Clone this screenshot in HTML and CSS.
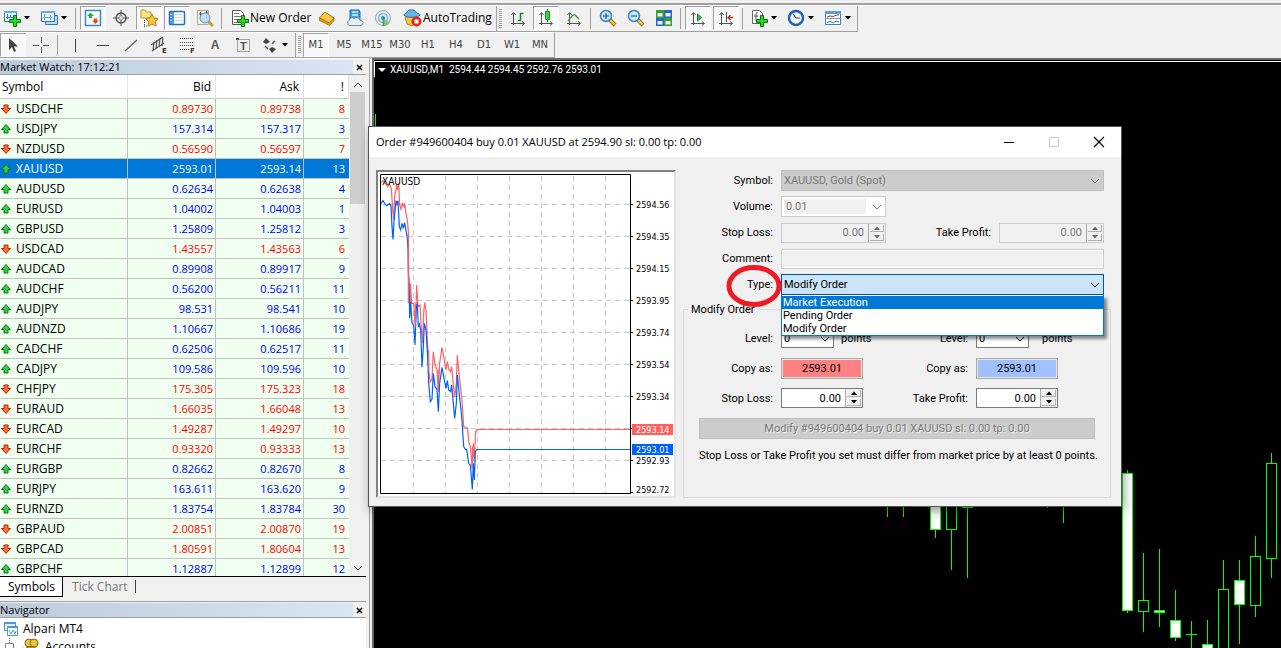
FILE: index.html
```html
<!DOCTYPE html>
<html lang="en">
<head>
<meta charset="utf-8">
<title>Alpari MT4</title>
<link rel="stylesheet" href="styles.css">
</head>
<body>
<svg class="defs" aria-hidden="true">
  <symbol id="up" viewBox="0 0 12 12"><path d="M6 1.500 10.500 6.500H8V10H4V6.500H1.500Z" fill="#3ccb46" stroke="#0d7a1c"/></symbol>
  <symbol id="down" viewBox="0 0 12 12"><path d="M6 10.500 10.500 5.500H8V2H4V5.500H1.500Z" fill="#ff6a35" stroke="#b0290a"/></symbol>
  <symbol id="caret" viewBox="0 0 6 4"><path d="M0 0h6L3 3.500Z"/></symbol>
  <symbol id="chev" viewBox="0 0 10 6"><path d="M1 1l4 4 4-4" fill="none" stroke="currentColor"/></symbol>
  <symbol id="plus" viewBox="0 0 12 12"><path d="M4.500 .5h3v4h4v3h-4v4h-3v-4h-4v-3h4Z" fill="#22dd22" stroke="#087508"/></symbol>
  <symbol id="axes" viewBox="0 0 18 18"><path d="M4.500 16V4M2.500 6l2-2.500 2 2.500M2 14.500h13M13 12.500l2.500 2-2.500 2" fill="none" stroke="#555"/></symbol>
  <symbol id="lens" viewBox="0 0 18 18"><path d="M11 11l5 5" stroke="#a47412" stroke-width="4"/><path d="M11 11l4.500 4.500" stroke="#f3cc50" stroke-width="2"/><circle cx="7" cy="7" r="5.500" fill="#cfeafd" stroke="#3b7fc4" stroke-width="1.500"/></symbol>
</svg>

<header class="toolbars">
  <div class="bar">
    <button class="tool drop" aria-label="New chart"><svg width="18" height="18" viewBox="0 0 18 18"><path d="M1.500 2.500h12v10h-12Z" fill="#eaf5ff" stroke="#2f78b7"/><path d="M1 2h13v2H1Z" fill="#69aee0"/><path d="M4.500 5v5M3 8.500h7M7.500 6v3" stroke="#2f78b7"/><use href="#plus" x="6" y="6" width="12" height="12"/></svg><svg class="caret" width="6" height="4"><use href="#caret"/></svg></button>
    <button class="tool drop" aria-label="Profiles"><svg width="18" height="18" viewBox="0 0 18 18"><path d="M5.500 6.500h12v9h-12Z" fill="#b9dcf7" stroke="#2f78b7"/><path d="M1.500 2.500h13v10h-13Z" fill="#eaf5ff" stroke="#2f78b7"/><path d="M1 2h14v2H1Z" fill="#69aee0"/><path d="M4.500 5v6M3 8.500h9M10.500 6v5" stroke="#6aa5d3"/></svg><svg class="caret" width="6" height="4"><use href="#caret"/></svg></button>
    <i class="sep"></i>
    <button class="tool on" aria-label="Market Watch"><svg width="18" height="18" viewBox="0 0 18 18"><path d="M1.500 1.500h15v15h-15Z" fill="#fff" stroke="#2f8ad0" stroke-width="1.500"/><path d="M6.500 3.500 10 7H8v2H5V7H3Z" fill="#25b32b"/><path d="M11.500 15 8 11.500h2v-2h3v2h2Z" fill="#f04a1d"/></svg></button>
    <button class="tool" aria-label="Data Window"><svg width="18" height="18" viewBox="0 0 18 18" fill="none" stroke="#555"><circle cx="9" cy="9" r="5" stroke-width="1.500"/><circle cx="9" cy="9" r="2" stroke="#999"/><path d="M9 1v6M9 11v6M1 9h6M11 9h6"/></svg></button>
    <button class="tool on" aria-label="Navigator"><svg width="18" height="18" viewBox="0 0 18 18"><path d="M1 3V1h4l1 2h5v6H1Z" fill="#fbe48a" stroke="#c7981b"/><path d="M4.500 11v7M4 17h4" stroke="#555" stroke-dasharray="1 1"/><path d="M12 5l2 4 4.500.5-3.300 3 1 4.500L12 15l-4 2 .8-4.500-3.300-3L10 9Z" fill="#f8c63a" stroke="#b57f10"/></svg></button>
    <button class="tool on" aria-label="Terminal"><svg width="18" height="18" viewBox="0 0 18 18"><rect x="1.500" y="2.500" width="15" height="13" rx="1" fill="#fff" stroke="#2473b8" stroke-width="1.500"/><path d="M2 3h4v12H2Z" fill="#4f9bd9"/><path d="M2.500 5.500h1M2.500 8.500h1M2.500 11.500h1" stroke="#fff"/><path d="M7 5.500h8M7 8.500h8M7 11.500h8" stroke="#c3d8ea"/></svg></button>
    <button class="tool" aria-label="Strategy Tester"><svg width="18" height="18" viewBox="0 0 18 18"><path d="M1.500 1.500h11v14h-11Z" fill="#f4efe2" stroke="#b7a98c"/><path d="M4.500 3v8M10.500 2v8M3 5h3M9 4h3" stroke="#555"/><path d="M12 12l5 5" stroke="#c8a03a" stroke-width="3"/><circle cx="9" cy="9" r="5" fill="#b9dcf5" fill-opacity=".85" stroke="#5a98cf"/></svg></button>
    <i class="sep"></i>
    <button class="tool wide" aria-label="New Order"><svg width="18" height="18" viewBox="0 0 18 18"><path d="M1.500 1.500h8l3 3v11h-11Z" fill="#fff" stroke="#555"/><path d="M3 4.500h5M3 7.500h7M3 10.500h4M3 13.500h3" stroke="#777"/><use href="#plus" x="6" y="6" width="12" height="12"/></svg><span>New Order</span></button>
    <button class="tool" aria-label="MetaEditor"><svg width="18" height="18" viewBox="0 0 18 18"><path d="M1.500 9 7 3l9 6-4 6Z" fill="#f4c944" stroke="#b5770d"/><path d="M1.500 9v2.500l10 5 4.500-5V9l-4.500 5Z" fill="#d99a1e" stroke="#a5690c" stroke-width=".7"/></svg></button>
    <button class="tool" aria-label="Virtual hosting"><svg width="18" height="18" viewBox="0 0 18 18"><path d="M4 1h9l1 2v8H4Z" fill="#36a2e8" stroke="#1b6fb0"/><path d="M6 3h6M6 6h6" stroke="#d9f0ff" stroke-width="1.500"/><path d="M3 16.500a3 3 0 0 1 0-5 3 3 0 0 1 5-2 3.500 3.500 0 0 1 6 2 2.500 2.500 0 0 1 1 5Z" fill="#e9f0f8" stroke="#6f8db0"/></svg></button>
    <button class="tool" aria-label="Signals"><svg width="18" height="18" viewBox="0 0 18 18" fill="none"><circle cx="9" cy="9" r="7.500" fill="#deeaf0" stroke="#8fb0c2"/><path d="M9 9l7 5a8 8 0 0 1-7 3Z" fill="#7cc47c"/><circle cx="9" cy="9" r="4.500" stroke="#8db8c8" stroke-width="1.500"/><circle cx="9" cy="9" r="2" fill="#2f86c2"/><path d="M9.500 9v8" stroke="#39a043" stroke-width="1.500"/></svg></button>
    <button class="tool wide auto" aria-label="AutoTrading"><svg width="19" height="18" viewBox="0 0 19 18"><path d="M2 8h13l-1 5-5 4-5-2Z" fill="#f5c83c" stroke="#b98518"/><path d="M1 6c0-2 3-1 3-3 1-3 8-3 9 0 0 2 4 1 4 3-1 3-15 3-16 0Z" fill="#67b4e6" stroke="#2c78b4"/><circle cx="13.500" cy="12.500" r="5" fill="#e3281a"/><path d="M11.500 10.500h4v4h-4Z" fill="#fff"/></svg><span>AutoTrading</span></button>
    <i class="sep end"></i><i class="grip"></i>
    <button class="tool" aria-label="Bar Chart"><svg width="18" height="18"><use href="#axes"/><path d="M11.500 4v8M11.500 4.500h3M9 11.500h3" fill="none" stroke="#118822" stroke-width="1.500"/></svg></button>
    <button class="tool on" aria-label="Candlesticks"><svg width="18" height="18"><use href="#axes"/><path d="M10.500 0v13" stroke="#118822"/><path d="M8.500 2.500h4v8h-4Z" fill="#30dd40" stroke="#118822"/></svg></button>
    <button class="tool" aria-label="Line Chart"><svg width="18" height="18"><use href="#axes"/><path d="M3 12c4-5 6-8 8-5l3 3" fill="none" stroke="#22a033" stroke-width="1.300"/></svg></button>
    <i class="sep"></i>
    <button class="tool" aria-label="Zoom In"><svg width="18" height="18"><use href="#lens"/><path d="M4 7h6M7 4v6" stroke="#2e75b8" stroke-width="1.500"/></svg></button>
    <button class="tool" aria-label="Zoom Out"><svg width="18" height="18"><use href="#lens"/><path d="M4 7h6" stroke="#2e75b8" stroke-width="1.500"/></svg></button>
    <button class="tool" aria-label="Tile Windows"><svg width="18" height="18" viewBox="0 0 18 18"><path d="M1 1h8v8H1Z" fill="#3f9e28"/><path d="M9 1h8v8H9Z" fill="#2665cc"/><path d="M1 9h8v8H1Z" fill="#2665cc"/><path d="M9 9h8v8H9Z" fill="#3f9e28"/><path d="M2.500 4h5v3.500h-5ZM10.500 4h5v3.500h-5ZM2.500 12h5v3.500h-5ZM10.500 12h5v3.500h-5Z" fill="#e6f2ff"/></svg></button>
    <i class="sep"></i>
    <button class="tool on" aria-label="Auto Scroll"><svg width="18" height="18"><use href="#axes"/><path d="M8.500 5l4 3.500-4 3.500Z" fill="#27c93f" stroke="#0f8420"/></svg></button>
    <button class="tool on" aria-label="Chart Shift"><svg width="18" height="18"><use href="#axes"/><path d="M9.500 3v10" stroke="#1c5f8c"/><path d="M16 8.500h-4M13.500 6 11 8.500l2.500 2.500" fill="none" stroke="#c43b18" stroke-width="1.500"/></svg></button>
    <i class="sep"></i>
    <button class="tool drop" aria-label="Indicators"><svg width="18" height="18" viewBox="0 0 18 18"><path d="M2.500 1.500h7l3 3v10h-10Z" fill="#fff" stroke="#666"/><path d="M8 4c-2-1-2 1-2 3v5M4 7h4" fill="none" stroke="#555"/><use href="#plus" x="6" y="6" width="12" height="12"/></svg><svg class="caret" width="6" height="4"><use href="#caret"/></svg></button>
    <button class="tool drop" aria-label="Periods"><svg width="18" height="18" viewBox="0 0 18 18"><circle cx="9" cy="9" r="7" fill="#eef5fc" stroke="#1d62b4" stroke-width="2.500"/><path d="M9 9 6 5M9 9h4" stroke="#444" stroke-width="1.200"/></svg><svg class="caret" width="6" height="4"><use href="#caret"/></svg></button>
    <button class="tool drop" aria-label="Templates"><svg width="18" height="18" viewBox="0 0 18 18"><path d="M1.500 2.500h15v13h-15Z" fill="#fff" stroke="#3a7fbd"/><path d="M1 2h16v3H1ZM1 9h16v1H1Z" fill="#5a9fd6"/><path d="M3 8l3-1 3 .5 4-1.500h2" fill="none" stroke="#a33b1a"/><path d="M3 14l3-2 3 2 3-2 3 1" fill="none" stroke="#2a9434"/></svg><svg class="caret" width="6" height="4"><use href="#caret"/></svg></button>
  </div>
  <div class="bar second">
    <button class="tool on" aria-label="Cursor"><svg width="18" height="18"><path d="M5 2v12l3-3 2 5 2-1-2-4.500h4Z" fill="#444"/></svg></button>
    <button class="tool" aria-label="Crosshair"><svg width="18" height="18"><path d="M9.500 1v6M9.500 11v6M1 9.500h6M11 9.500h6" stroke="#555"/></svg></button>
    <i class="sep"></i>
    <button class="tool" aria-label="Vertical Line"><svg width="18" height="18"><path d="M9.500 3v13" stroke="#444"/></svg></button>
    <button class="tool" aria-label="Horizontal Line"><svg width="18" height="18"><path d="M3 9.500h12" stroke="#444"/></svg></button>
    <button class="tool" aria-label="Trendline"><svg width="18" height="18"><path d="M3 15 15 4" stroke="#555" stroke-width="1.200"/></svg></button>
    <button class="tool" aria-label="Equidistant Channel"><svg width="18" height="18" viewBox="0 0 18 18"><path d="M1 9 13 1M2 15 14 7M4 6l-1 8M7 4 6 12M10 2 9 11M13 2l-1 8" stroke="#555" stroke-width="1.200"/><text x="12" y="17" class="mini">E</text></svg></button>
    <button class="tool" aria-label="Fibonacci Retracement"><svg width="18" height="18" viewBox="0 0 18 18"><path d="M2 2.500h14M2 6.500h14M2 9.500h14M2 13.500h9" stroke="#444" stroke-dasharray="1 1"/><text x="12" y="17" class="mini">F</text></svg></button>
    <button class="tool letter" aria-label="Text">A</button>
    <button class="tool" aria-label="Text Label"><svg width="18" height="18" viewBox="0 0 18 18"><path d="M3.500 3.500h12v12h-12Z" fill="none" stroke="#555" stroke-dasharray="1 1"/><path d="M2 2h3v2H2Z" fill="#555"/><text x="6" y="14" class="label-t">T</text></svg></button>
    <button class="tool drop" aria-label="Arrows"><svg width="18" height="18" viewBox="0 0 18 18"><path d="M2 6l3-4 4 4-4 2ZM8 13l3-2 4 2-4 4Z" fill="#444"/><path d="M4 10l3 3M11 8l3-3" stroke="#555" stroke-width="1.500"/></svg><svg class="caret" width="6" height="4"><use href="#caret"/></svg></button>
    <i class="sep end"></i><i class="grip"></i>
    <button class="tool on">M1</button><button class="tool">M5</button><button class="tool">M15</button><button class="tool">M30</button><button class="tool">H1</button><button class="tool">H4</button><button class="tool">D1</button><button class="tool">W1</button><button class="tool">MN</button>
  </div>
</header>

<main class="workspace">
  <aside class="side">
    <section class="watch">
      <h2 class="caption"><span>Market Watch: 17:12:21</span><button aria-label="Close Market Watch"><svg width="7" height="7"><path d="M1 1l5 5M6 1 1 6" stroke="#000" stroke-width="1.500"/></svg></button></h2>
      <div class="quotes">
        <table>
          <thead><tr><th>Symbol</th><th>Bid</th><th>Ask</th><th>!</th></tr></thead>
          <tbody>
            <tr class="dn"><td><svg><use href="#down"/></svg>USDCHF</td><td>0.89730</td><td>0.89738</td><td>8</td></tr>
            <tr><td><svg><use href="#up"/></svg>USDJPY</td><td>157.314</td><td>157.317</td><td>3</td></tr>
            <tr class="dn"><td><svg><use href="#down"/></svg>NZDUSD</td><td>0.56590</td><td>0.56597</td><td>7</td></tr>
            <tr class="sel"><td><svg><use href="#up"/></svg>XAUUSD</td><td>2593.01</td><td>2593.14</td><td>13</td></tr>
            <tr><td><svg><use href="#up"/></svg>AUDUSD</td><td>0.62634</td><td>0.62638</td><td>4</td></tr>
            <tr><td><svg><use href="#up"/></svg>EURUSD</td><td>1.04002</td><td>1.04003</td><td>1</td></tr>
            <tr><td><svg><use href="#up"/></svg>GBPUSD</td><td>1.25809</td><td>1.25812</td><td>3</td></tr>
            <tr class="dn"><td><svg><use href="#down"/></svg>USDCAD</td><td>1.43557</td><td>1.43563</td><td>6</td></tr>
            <tr><td><svg><use href="#up"/></svg>AUDCAD</td><td>0.89908</td><td>0.89917</td><td>9</td></tr>
            <tr><td><svg><use href="#up"/></svg>AUDCHF</td><td>0.56200</td><td>0.56211</td><td>11</td></tr>
            <tr><td><svg><use href="#up"/></svg>AUDJPY</td><td>98.531</td><td>98.541</td><td>10</td></tr>
            <tr><td><svg><use href="#up"/></svg>AUDNZD</td><td>1.10667</td><td>1.10686</td><td>19</td></tr>
            <tr><td><svg><use href="#up"/></svg>CADCHF</td><td>0.62506</td><td>0.62517</td><td>11</td></tr>
            <tr><td><svg><use href="#up"/></svg>CADJPY</td><td>109.586</td><td>109.596</td><td>10</td></tr>
            <tr class="dn"><td><svg><use href="#down"/></svg>CHFJPY</td><td>175.305</td><td>175.323</td><td>18</td></tr>
            <tr class="dn"><td><svg><use href="#down"/></svg>EURAUD</td><td>1.66035</td><td>1.66048</td><td>13</td></tr>
            <tr class="dn"><td><svg><use href="#down"/></svg>EURCAD</td><td>1.49287</td><td>1.49297</td><td>10</td></tr>
            <tr class="dn"><td><svg><use href="#down"/></svg>EURCHF</td><td>0.93320</td><td>0.93333</td><td>13</td></tr>
            <tr><td><svg><use href="#up"/></svg>EURGBP</td><td>0.82662</td><td>0.82670</td><td>8</td></tr>
            <tr><td><svg><use href="#up"/></svg>EURJPY</td><td>163.611</td><td>163.620</td><td>9</td></tr>
            <tr><td><svg><use href="#up"/></svg>EURNZD</td><td>1.83754</td><td>1.83784</td><td>30</td></tr>
            <tr class="dn"><td><svg><use href="#down"/></svg>GBPAUD</td><td>2.00851</td><td>2.00870</td><td>19</td></tr>
            <tr class="dn"><td><svg><use href="#down"/></svg>GBPCAD</td><td>1.80591</td><td>1.80604</td><td>13</td></tr>
            <tr><td><svg><use href="#up"/></svg>GBPCHF</td><td>1.12887</td><td>1.12899</td><td>12</td></tr>
          </tbody>
        </table>
        <div class="scroll"><svg class="flip" width="10" height="6"><use href="#chev"/></svg><i class="thumb"></i><svg width="10" height="6"><use href="#chev"/></svg></div>
      </div>
      <nav class="tabs"><button class="active">Symbols</button><button>Tick Chart</button></nav>
    </section>
    <section class="navigator">
      <h2 class="caption"><span>Navigator</span><button aria-label="Close Navigator"><svg width="7" height="7"><path d="M1 1l5 5M6 1 1 6" stroke="#000" stroke-width="1.500"/></svg></button></h2>
      <ul class="tree">
        <li><svg width="16" height="16"><path d="M2.500 1.500h11v8h-11Z" fill="#e5f3ff" stroke="#4a97d6"/><path d="M2 1h12v2H2Z" fill="#4a97d6"/><path d="M5.500 5.500h10v9h-10Z" fill="#fff" stroke="#4a97d6"/><path d="M5 5h11v2H5Z" fill="#4a97d6"/><path d="M7 9l2 4 2-4 2 4 1-3" fill="none" stroke="#4a97d6"/></svg>Alpari MT4</li>
        <li class="child"><svg width="12" height="18"><path d="M4.500 0v5" stroke="#777" stroke-dasharray="1 1"/><path d="M.5 5.500h8v8h-8Z" fill="#fff" stroke="#888"/></svg><svg width="18" height="18"><circle cx="7" cy="5" r="4" fill="#eac53c" stroke="#8a6a0c"/><circle cx="12" cy="5" r="4" fill="#eac53c" stroke="#8a6a0c"/><path d="M1 17c0-9 8-8 8-8s8-1 8 8Z" fill="#d9ae22" stroke="#8a6a0c"/><path d="M1 9l4 6-4 2Z" fill="#2fb53a"/></svg>Accounts</li>
      </ul>
    </section>
  </aside>
  <section class="chart">
    <p><svg width="8" height="4" viewBox="0 0 8 4"><path d="M0 0h8L4 4Z" fill="#fff"/></svg><span>XAUUSD,M1&nbsp; 2594.44 2594.45 2592.76 2593.01</span></p>
    <svg class="candles" viewBox="375 62 906 586" width="906" height="586" shape-rendering="crispEdges" stroke="#0f0" fill="#000">
      <path d="M375.500 114v20M887.500 490v27M903.500 490v27M935.500 490v48M951.500 490v80M967.500 490v88M1047.500 490v18M1063.500 490v33M1127.500 470v143M1143.500 553v79M1159.500 549v78M1175.500 590v51M1191.500 621v27M1186 634.500h11M1207.500 620v28M1223.500 560v30M1239.500 560v84M1255.500 536v81M1271.500 453v125"/>
      <path fill="#fff" d="M930.500 490h10v39h-10ZM1122.500 473.500h10v137h-10ZM1154.500 610.500h10v2h-10ZM1170.500 620.500h10v17h-10ZM1202.500 644.500h10v14h-10ZM1234.500 580.500h10v24h-10Z"/>
      <path d="M946.500 490h10v39h-10ZM962.500 490h10v17h-10ZM1138.500 600.500h10v11h-10ZM1218.500 589.500h10v70h-10ZM1250.500 556.500h10v49h-10ZM1266.500 463.500h10v95h-10Z"/>
    </svg>
  </section>
</main>

<section class="dialog" role="dialog" aria-labelledby="dlg-title">
  <header class="titlebar">
    <h1 id="dlg-title">Order #949600404 buy 0.01 XAUUSD at 2594.90 sl: 0.00 tp: 0.00</h1>
    <button aria-label="Minimize"><svg width="12" height="12"><path d="M1 6.500h10" stroke="#000"/></svg></button>
    <button aria-label="Maximize" disabled><svg width="12" height="12"><path d="M1.500 1.500h9v9h-9Z" fill="none" stroke="#ccc"/></svg></button>
    <button aria-label="Close"><svg width="12" height="12"><path d="M1 1l10 10M11 1 1 11" stroke="#000" stroke-width="1.200"/></svg></button>
  </header>
  <div class="content">
    <figure class="ticks">
      <svg width="296" height="324" viewBox="378 172 296 324">
        <path d="M413.500 176v317M445.500 176v317M477.500 176v317M509.500 176v317M541.500 176v317M573.500 176v317M605.500 176v317M381 204.500h250M381 236.500h250M381 268.500h250M381 300.500h250M381 332.500h250M381 364.500h250M381 396.500h250M381 428.500h250M381 460.500h250" stroke="#c8c8c8" stroke-dasharray="5 4"/>
        <g transform="translate(376 170) scale(.33333)" fill="none" stroke-width="3.600">
          <path stroke="#ff6060" d="M15 38 21 32 30 42 35 50 40 42 46 55 50 120 53 148 56 80 62 45 65 60 68 40 71 105 75 118 79 100 84 110 86 100 90 130 94 150 97 185 98 305 102 400 103 340 107 400 113 400 118 470 122 345 126 410 132 405 135 460 140 520 143 430 146 398 150 420 155 530 158 600 163 635 168 628 172 545 177 585 183 600 187 665 191 580 198 532 204 565 210 600 214 575 219 600 224 605 227 590 232 645 236 682 241 640 244 555 249 610 255 665 258 690 263 770 275 775 278 815 283 830 289 895 292 820 295 870 299 785 303 778.500H765"/>
          <path stroke="#0060ff" d="M15 100 21 92 27 102 32 107 40 101 45 107 48 170 51 208 54 155 60 92 63 102 66 92 70 170 74 180 78 160 82 175 86 158 90 182 94 205 96 240 97 305 100 385 101 445 104 395 108 460 113 465 117 525 121 408 124 402 127 470 130 462 134 480 138 592 142 530 145 460 150 480 155 560 158 640 163 695 168 688 172 610 177 650 183 658 187 725 191 640 198 592 204 625 210 655 214 632 218 660 224 665 227 645 232 700 236 745 241 700 244 615 249 665 255 720 258 750 263 830 268 838 272 838 278 880 283 885 289 958 292 880 295 930 298 845 302 838.500H765"/>
          <path stroke="#ff6060" d="M97 190V400M118 400V470M158 540V600M187 600V665M289 830V895"/>
        </g>
        <path d="M380.500 174.500h250v319h-250ZM631 204.500h2M631 236.500h2M631 268.500h2M631 300.500h2M631 332.500h2M631 364.500h2M631 396.500h2M631 428.500h2M631 460.500h2M631 492.500h2" fill="none" stroke="#000"/>
        <path d="M632 424h41v11h-41Z" fill="#ff6060"/><path d="M632 444h41v11h-41Z" fill="#0060ff"/>
        <g class="scale"><text x="382" y="185" class="name">XAUUSD</text><text x="636" y="208">2594.56</text><text x="636" y="240">2594.35</text><text x="636" y="272">2594.15</text><text x="636" y="304">2593.95</text><text x="636" y="336">2593.74</text><text x="636" y="368">2593.54</text><text x="636" y="400">2593.34</text><text x="636" y="464">2592.93</text><text x="636" y="493">2592.72</text><text x="636" y="433" fill="#fff">2593.14</text><text x="636" y="453" fill="#fff">2593.01</text></g>
      </svg>
    </figure>
    <form class="order">
      <div class="fields">
        <label for="symbol">Symbol:</label>
        <span class="combo full dark"><select id="symbol" disabled><option>XAUUSD, Gold (Spot)</option></select><svg width="10" height="6"><use href="#chev"/></svg></span>
        <label for="volume">Volume:</label>
        <span class="combo vol"><select id="volume" disabled><option>0.01</option></select><svg width="10" height="6"><use href="#chev"/></svg></span><i></i><i></i>
        <label for="sl0">Stop Loss:</label>
        <span class="spin off"><input id="sl0" value="0.00" disabled><span><button type="button" disabled aria-label="Increase"><svg class="flip" width="6" height="4"><use href="#caret"/></svg></button><button type="button" disabled aria-label="Decrease"><svg width="6" height="4"><use href="#caret"/></svg></button></span></span>
        <label for="tp0">Take Profit:</label>
        <span class="spin off"><input id="tp0" value="0.00" disabled><span><button type="button" disabled aria-label="Increase"><svg class="flip" width="6" height="4"><use href="#caret"/></svg></button><button type="button" disabled aria-label="Decrease"><svg width="6" height="4"><use href="#caret"/></svg></button></span></span>
        <label for="comment">Comment:</label>
        <input id="comment" class="full text" disabled>
        <label for="type">Type:<svg class="mark" width="56" height="44" viewBox="0 0 56 44"><ellipse cx="28" cy="22" rx="25" ry="18.500" fill="none" stroke="#ed1c24" stroke-width="5"/></svg></label>
        <span class="combo full open"><select id="type"><option>Modify Order</option></select><svg width="10" height="6"><use href="#chev"/></svg>
          <ul class="menu" role="listbox"><li class="hot" role="option">Market Execution</li><li role="option">Pending Order</li><li role="option">Modify Order</li></ul></span>
      </div>
      <fieldset>
        <legend>Modify Order</legend>
        <div class="modify">
          <label for="lv1">Level:</label>
          <span class="level"><span class="combo"><select id="lv1"><option>0</option></select><svg width="10" height="6"><use href="#chev"/></svg></span><span>points</span></span>
          <label for="lv2">Level:</label>
          <span class="level far"><span class="combo"><select id="lv2"><option>0</option></select><svg width="10" height="6"><use href="#chev"/></svg></span><span>points</span></span>
          <label for="c1">Copy as:</label><button id="c1" class="copy red" type="button">2593.01</button>
          <label for="c2">Copy as:</label><button id="c2" class="copy blue" type="button">2593.01</button>
          <label for="sl1">Stop Loss:</label>
          <span class="spin"><input id="sl1" value="0.00"><span><button type="button" aria-label="Increase"><svg class="flip" width="6" height="4"><use href="#caret"/></svg></button><button type="button" aria-label="Decrease"><svg width="6" height="4"><use href="#caret"/></svg></button></span></span>
          <label for="tp1">Take Profit:</label>
          <span class="spin"><input id="tp1" value="0.00"><span><button type="button" aria-label="Increase"><svg class="flip" width="6" height="4"><use href="#caret"/></svg></button><button type="button" aria-label="Decrease"><svg width="6" height="4"><use href="#caret"/></svg></button></span></span>
        </div>
        <button class="submit" type="button" disabled>Modify #949600404 buy 0.01 XAUUSD sl: 0.00 tp: 0.00</button>
        <p class="note">Stop Loss or Take Profit you set must differ from market price by at least 0 points.</p>
      </fieldset>
    </form>
  </div>
</section>
</body>
</html>
```
FILE: styles.css
```css
* { box-sizing: border-box; }
body { margin: 0; height: 100vh; overflow: hidden; display: flex; flex-direction: column; position: relative; background: #f0f0f0; color: #000; font: 12px/16px "Open Sans", "Noto Sans", sans-serif; }
button, input, select { font: inherit; color: inherit; margin: 0; padding: 0; }
button { border: 0; background: none; }
h1, h2, p, ul, figure { margin: 0; padding: 0; font-weight: normal; list-style: none; }
svg { display: block; flex: none; }
.defs { position: absolute; width: 0; height: 0; }
.flip { transform: rotate(180deg); }

/* toolbars */
.toolbars { padding-top: 3px; display: flex; flex-direction: column; align-items: flex-start; }
.toolbars::before { content: ""; align-self: stretch; height: 2px; background: #a0a0a0; border-bottom: 1px solid #fff; }
.bar { display: flex; gap: 2px; height: 26px; padding-right: 1px; border-right: 1px solid #a0a0a0; border-bottom: 1px solid #a0a0a0; }
.bar.second { height: 26px; border-top: 1px solid #fff; }
.tool { width: 26px; height: 24px; display: flex; align-items: center; justify-content: center; border: 1px solid transparent; white-space: nowrap; }
.tool.on { border-color: #a0a0a0 #fff #fff #a0a0a0; background: #f8f8f8; }
.tool.drop { width: 35px; padding-left: 2px; justify-content: flex-start; gap: 3px; }
.tool.wide { width: 86px; padding-left: 4px; justify-content: flex-start; gap: 1px; }
.tool.auto { width: 96px; }
.sep { width: 1px; margin: 2px 2px 2px 1px; background: #a0a0a0; }
.sep.end { margin: 0; }
.grip { width: 3px; margin: 3px 1px 3px 0; background: repeating-linear-gradient(#a0a0a0 0 1px, #f0f0f0 1px 2px); }
.second .grip { margin-right: 0; }
.second .tool { font: 10px/12px "DejaVu Sans", sans-serif; color: #444; }
.second .tool.letter { font: bold 12px/16px "Liberation Sans", sans-serif; color: #555; }
.second .caret { fill: #000; }
.mini { font: bold 7px "DejaVu Sans", sans-serif; fill: #333; }
.label-t { font: bold 11px "Liberation Sans", sans-serif; fill: #555; }

/* docked panels */
.workspace { flex: 1; min-height: 0; display: flex; }
.side { width: 370px; display: flex; flex-direction: column; padding-right: 3px; border-top: 1px solid #fff; border-right: 1px solid #a0a0a0; }
.caption { display: flex; height: 16px; font-size: 11px; line-height: 13px; padding-top: 1px; border-bottom: 1px solid #a0a0a0; }
.caption span { flex: 1; background: linear-gradient(90deg, #bccbda, #d8e5f2); }
.caption button { width: 13px; display: flex; align-items: center; justify-content: center; }
.watch { height: 543px; display: flex; flex-direction: column; border-bottom: 1px solid #a0a0a0; }
.quotes { flex: 1; min-height: 0; display: flex; overflow: hidden; background: #fff; }
.quotes table { flex: 1; align-self: flex-start; border-collapse: separate; border-spacing: 0; table-layout: fixed; }
.quotes th { height: 24px; padding: 0 4px; text-align: right; font-weight: normal; border-right: 1px solid #e5e5e5; border-bottom: 1px solid #c8c8c8; }
.quotes th:first-child { width: 128px; text-align: left; padding-left: 2px; }
.quotes th:nth-child(2), .quotes th:nth-child(3) { width: 88px; }
.quotes td { height: 20px; padding: 0 2px; line-height: 16px; text-align: right; font-size: 11px; background: #f0fff0; color: #00f; border-right: 1px solid #c0c0c0; border-bottom: 1px solid #c0c0c0; }
.quotes td:last-child { border-right: 0; padding-right: 4px; }
.quotes .dn td { color: #f00; }
.quotes .sel td { background: #0078d7; color: #fff; }
.quotes tr td:first-child { color: #000; font-size: 12px; padding: 0; display: flex; align-items: center; gap: 4px; }
.quotes .sel td:first-child { color: #fff; }
.quotes td svg { width: 12px; height: 12px; }
.scroll { width: 17px; padding: 7px 0 5px; display: flex; flex-direction: column; align-items: center; background: #f0f0f0; color: #444; }
.thumb { width: 15px; height: 112px; margin: 4px 0 auto; background: #cdcdcd; }
.tabs { height: 25px; display: flex; align-items: flex-start; border-top: 1px solid #000; }
.tabs button { height: 20px; padding: 0 9px; line-height: 18px; color: #777; }
.tabs .active { background: #fff; color: #000; padding: 0 7px 0 8px; border: solid #000; border-width: 0 1px 1px 0; }
.tabs button + button::after { content: ""; display: inline-block; width: 1px; height: 13px; margin-left: 7px; vertical-align: -2px; background: #444; }
.navigator { flex: 1; display: flex; flex-direction: column; min-height: 0; }
.tree { flex: 1; background: #fff; overflow: hidden; padding-top: 1px; }
.tree li { height: 18px; display: flex; align-items: center; gap: 5px; padding: 2px 0 0 2px; }
.tree .child { padding-left: 5px; }

/* price chart */
.chart { flex: 1; min-width: 0; margin-left: 2px; border-top: 2px solid #696969; border-left: 2px solid #696969; background: #000; overflow: hidden; color: #fff; font: 10px/12px Roboto, "Open Sans", sans-serif; }
.chart p { display: flex; align-items: center; gap: 4px; margin-top: 1px; height: 16px; padding-left: 3px; border-top: 1px solid #fff; border-left: 1px solid #fff; }
.candles { margin: -15px 0 0 1px; }

/* order window */
.dialog { position: absolute; left: 368px; top: 126px; width: 754px; border: 1px solid #555; background: #f0f0f0; box-shadow: 2px 4px 10px rgba(0, 0, 0, .4); font: 11px/13px Roboto, "Open Sans", sans-serif; }
.titlebar { height: 30px; display: flex; background: #fff; }
.titlebar h1 { flex: 1; padding-left: 7px; font: 11px/30px "Open Sans", "Noto Sans", sans-serif; }
.titlebar button { width: 45px; display: flex; align-items: center; justify-content: center; }
.content { display: flex; gap: 7px; padding: 13px 10px 8px 7px; }
.ticks { width: 300px; height: 328px; background: #fff; border: 2px solid; border-color: #808080 #e3e3e3 #e3e3e3 #808080; }
.scale { font: 9px "DejaVu Sans Condensed", "DejaVu Sans", sans-serif; }
.scale .name { font-size: 10px; }
.order { flex: 1; min-width: 0; }
.fields { display: grid; grid-template-columns: 90px 105px 1fr 105px; grid-auto-rows: 21px; gap: 5px 8px; padding-right: 7px; align-items: center; }
label { text-align: right; position: relative; }
.full { grid-column: 2 / -1; }
.combo { position: relative; display: block; height: 21px; border: 1px solid #7a7a7a; background: #fff; }
.combo > svg { position: absolute; right: 3px; top: 7px; }
.combo select { width: 100%; height: 19px; padding-left: 2px; border: 0; appearance: none; background: none; outline: 0; opacity: 1; }
.combo.dark { background: #ccc; border-color: #bfbfbf; color: #777; }
.combo.vol { border-color: #ccc; color: #777; padding: 2px 19px 2px 2px; }
.combo.vol select { height: 15px; background: #f0f0f0; }
.combo.open { background: #cce4f7; border-color: #00559b; }
.menu { position: absolute; z-index: 2; top: 20px; left: -1px; right: -1px; padding-top: 1px; border: 1px solid #0078d7; border-top: 0; background: #fff; box-shadow: 3px 3px 3px rgba(0, 0, 0, .45); }
.menu li { padding-left: 1px; }
.menu .hot { background: #0078d7; color: #fff; }
.mark { position: absolute; z-index: 3; right: -9px; top: -14px; }
.text { height: 20px; border: 1px solid #ccc; outline: 1px solid #fff; outline-offset: -2px; background: #f0f0f0; }
.spin { display: flex; height: 20px; border: 1px solid #7a7a7a; background: #fff; }
.spin input { flex: 1; min-width: 0; border: 0; outline: 0; background: none; text-align: right; padding-right: 4px; }
.spin > span { width: 17px; display: grid; gap: 2px; padding: 1px; background: #f0f0f0; border-left: 1px solid #aaa; }
.spin button { display: flex; align-items: center; justify-content: center; border: solid #b0b0b0; border-width: 0 1px 1px 0; }
.spin.off { border-color: #ccc; background: #f0f0f0; color: #777; fill: #666; }
fieldset { min-width: 0; height: 195px; margin: 8px 0 0; padding: 12px 15px 0 0; border: 1px solid #dcdcdc; }
legend { margin-left: 4px; padding: 0 3px; }
.modify { display: grid; grid-template-columns: 89px 82px 97px 82px; grid-auto-rows: 20px; gap: 10px 8px; align-items: center; }
.level { display: flex; align-items: center; gap: 7px; white-space: nowrap; }
.level.far { gap: 13px; }
.level .combo { flex: none; width: 53px; height: 20px; }
.copy { width: 82px; height: 21px; border: 1px solid #aaa; outline: 1px solid #e3e3e3; outline-offset: -2px; }
.copy.red { background: #ff8080; }
.copy.blue { background: #a0c0ff; }
.submit { display: block; width: calc(100% - 15px); height: 21px; margin: 10px 0 0 15px; background: #ccc; border: 1px solid #bfbfbf; color: #777; text-shadow: 1px 1px #eee; }
.note { margin: 10px 0 0 15px; white-space: nowrap; }
```
